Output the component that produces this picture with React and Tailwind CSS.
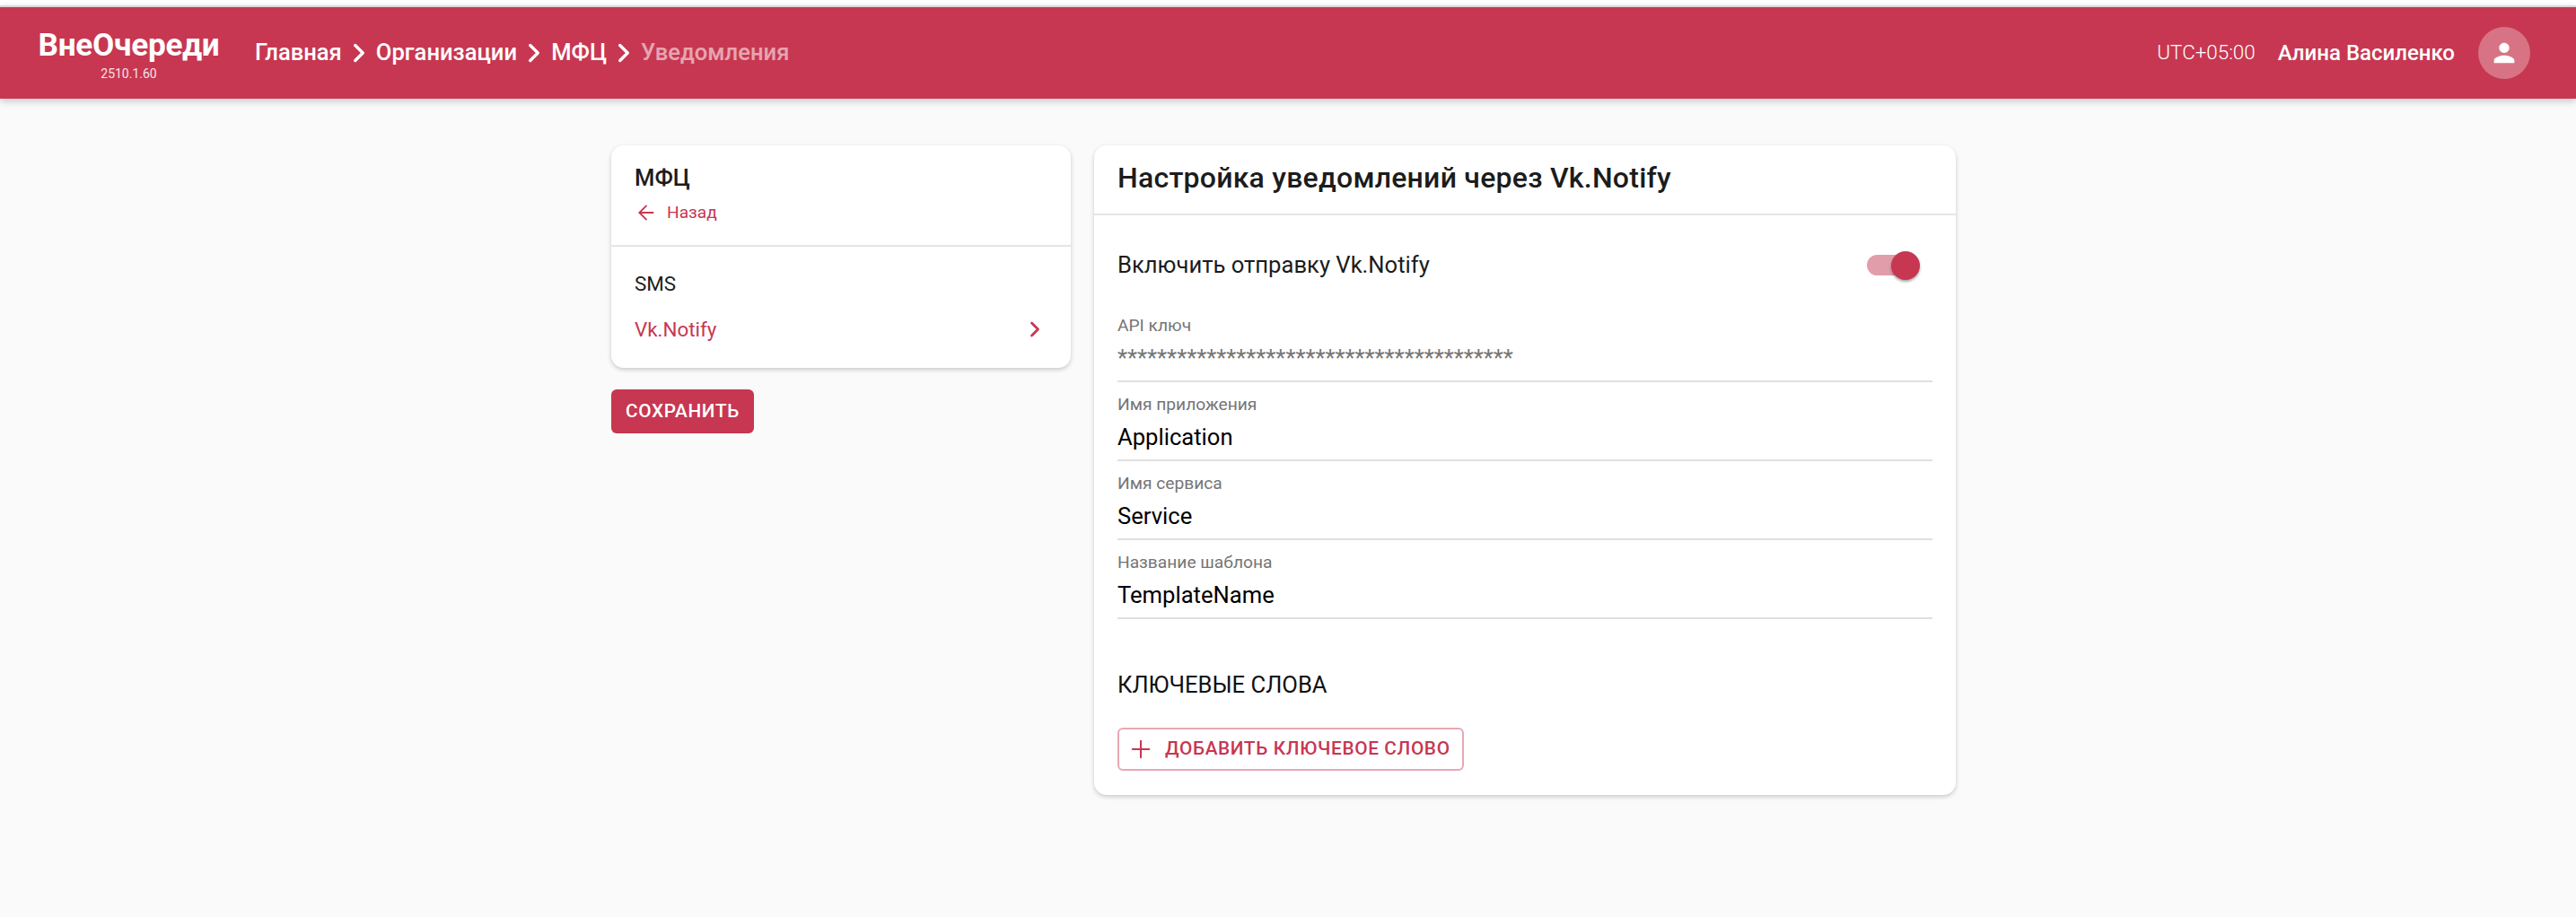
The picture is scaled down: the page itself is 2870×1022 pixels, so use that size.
import React from "react";
import { ArrowLeft, ChevronRight, Plus } from "lucide-react";

const FIELDS = [
  { label: "API ключ", value: "****************************************", muted: true },
  { label: "Имя приложения", value: "Application" },
  { label: "Имя сервиса", value: "Service" },
  { label: "Название шаблона", value: "TemplateName" },
];

function Crumb({ children }) {
  return <span className="text-[25.6px] font-medium leading-none text-white">{children}</span>;
}

function Separator() {
  return <ChevronRight className="w-[34px] h-[34px] mx-[2px] text-white" strokeWidth={2.4} />;
}

function Field({ label, value, muted }) {
  return (
    <div className="h-[88px] border-b-2 border-[#e0e0e0] pt-[13px]">
      <div className="text-[19.2px] leading-[24px] text-[#757575]">{label}</div>
      <div className={`mt-[7px] text-[25.6px] leading-[34px] ${muted ? "text-[#757575]" : "text-black"}`}>{value}</div>
    </div>
  );
}

export default function App() {
  return (
    <div className="min-h-[1022px] bg-[#fafafa] font-['Roboto',sans-serif] text-[#1c1c1c]">
      <div className="h-[6px] bg-white" />
      <header className="h-[104px] border-t-2 border-[#d9d9d9] bg-[#c73751] shadow-[0_3px_8px_rgba(0,0,0,0.2)] flex items-center pl-[42px] pr-[51px]">
        <div className="w-[203px] pt-[3px] flex flex-col items-center">
          <div className="text-[35.2px] font-bold leading-[40px] text-white tracking-[-0.3px]">ВнеОчереди</div>
          <div className="text-[14px] leading-[18px] mt-[3px] text-white/85">2510.1.60</div>
        </div>
        <nav className="ml-[39px] flex items-center">
          <Crumb>Главная</Crumb>
          <Separator />
          <Crumb>Организации</Crumb>
          <Separator />
          <Crumb>МФЦ</Crumb>
          <Separator />
          <span className="text-[25.6px] font-medium leading-none text-white/55">Уведомления</span>
        </nav>
        <div className="ml-auto flex items-center">
          <span className="text-[22.4px] font-light text-white">UTC+05:00</span>
          <span className="ml-[25px] text-[24px] font-medium text-white">Алина Василенко</span>
          <div className="ml-[26px] w-[58px] h-[58px] rounded-full bg-white/30 flex items-center justify-center">
            <svg viewBox="0 0 24 24" className="w-[34px] h-[34px] fill-white">
              <path d="M12 12c2.21 0 4-1.79 4-4s-1.79-4-4-4-4 1.79-4 4 1.79 4 4 4zm0 2c-2.67 0-8 1.34-8 4v2h16v-2c0-2.66-5.33-4-8-4z" />
            </svg>
          </div>
        </div>
      </header>

      <main className="pr-[10px] pt-[52px] flex justify-center items-start gap-[26px]">
        <div className="w-[512px]">
          <section className="h-[248px] rounded-[14px] bg-white shadow-[0_2px_5px_rgba(0,0,0,0.2)]">
            <div className="h-[113px] border-b-2 border-[#e5e5e5] px-[26px] pt-[22px]">
              <div className="text-[25.6px] font-medium leading-[28px]">МФЦ</div>
              <div className="mt-[12px] flex items-center text-[19.2px] leading-[26px] text-[#c73751]">
                <ArrowLeft className="w-[26px] h-[26px]" strokeWidth={1.7} />
                <span className="ml-[10px]">Назад</span>
              </div>
            </div>
            <div className="px-[26px] pt-[25px]">
              <div className="text-[22.4px] leading-[32px]">SMS</div>
              <div className="mt-[19px] flex items-center justify-between text-[22.4px] leading-[32px] text-[#c73751]">
                <span>Vk.Notify</span>
                <ChevronRight className="w-[28px] h-[28px]" strokeWidth={2.4} />
              </div>
            </div>
          </section>
          <button className="mt-[24px] w-[159px] h-[49px] rounded-[6px] bg-[#c73751] text-[20.8px] font-medium tracking-[0.64px] text-white whitespace-nowrap">
            СОХРАНИТЬ
          </button>
        </div>

        <section className="w-[960px] h-[724px] rounded-[14px] bg-white shadow-[0_2px_5px_rgba(0,0,0,0.2)]">
          <h1 className="h-[78px] border-b-2 border-[#e5e5e5] px-[26px] pt-[14px] text-[32px] font-medium leading-[44px] tracking-[0.24px]">
            Настройка уведомлений через Vk.Notify
          </h1>
          <div className="px-[26px]">
            <div className="h-[98px] pt-[12px] flex items-center justify-between pr-[16px]">
              <span className="text-[25.6px]">Включить отправку Vk.Notify</span>
              <div className="relative w-[57px] h-[23px] rounded-full bg-[#e29dab]">
                <div className="absolute right-[-2px] top-[-4px] w-[32px] h-[32px] rounded-full bg-[#c73751] shadow-[0_2px_3px_rgba(0,0,0,0.35)]" />
              </div>
            </div>
            {FIELDS.map(field => (
              <Field key={field.label} {...field} />
            ))}
            <div className="mt-[57px] text-[25.6px] leading-[32px] text-[#111]">КЛЮЧЕВЫЕ СЛОВА</div>
            <button className="mt-[32px] w-[386px] h-[48px] rounded-[6px] border-2 border-[#e8a7b4] flex items-center pl-[8px] text-[20.8px] font-medium tracking-[0.64px] text-[#c73751] whitespace-nowrap">
              <Plus className="w-[32px] h-[32px]" strokeWidth={1.5} />
              <span className="ml-[11px]">ДОБАВИТЬ КЛЮЧЕВОЕ СЛОВО</span>
            </button>
          </div>
        </section>
      </main>
    </div>
  );
}
